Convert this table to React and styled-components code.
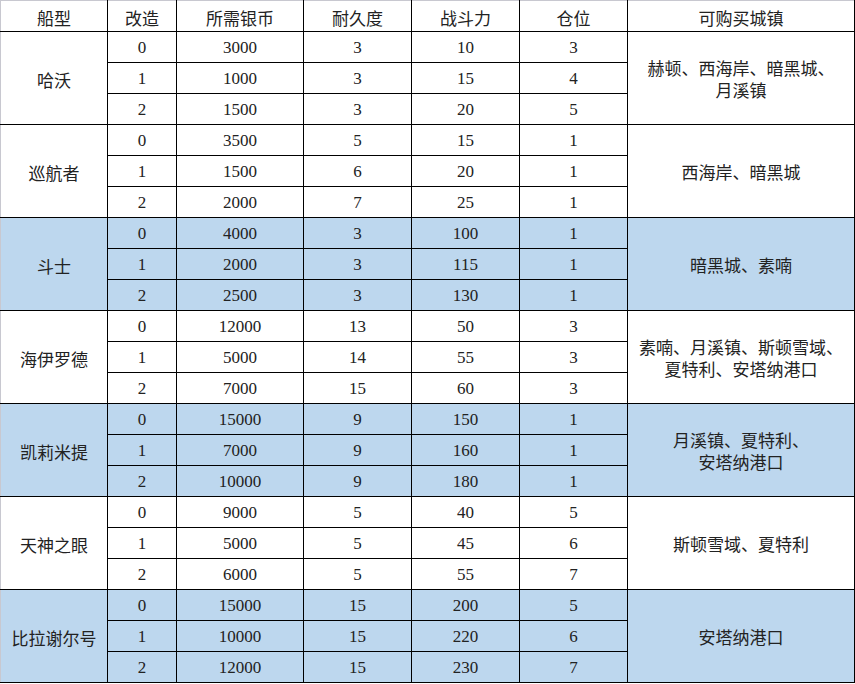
import React from "react"
import styled, { createGlobalStyle } from "styled-components"

const GlobalStyle = createGlobalStyle`
  html, body {
    margin: 0;
    padding: 0;
    background: #fff;
  }
`

const Table = styled.table`
  width: 854px;
  border-collapse: collapse;
  table-layout: fixed;
  font-family: "Liberation Serif", "Noto Sans CJK SC", serif;
  font-size: 17px;
  color: #222;
  border-top: 1px solid #c8c8d0;
  border-left: 1px solid #c8c8d0;
`

const Row = styled.tr`
  height: 31px;
  background: ${props => (props.$blue ? "#bdd7ee" : "#fff")};
`

const Head = styled.th`
  font-weight: normal;
  padding: 2px 0 0;
  text-align: center;
  vertical-align: middle;
  border-bottom: 1px solid #000;
  border-right: 1px solid #000;
  border-top: 1px solid #c8c8d0;
  &:first-child {
    border-left: 1px solid #c8c8d0;
  }
`

const Cell = styled.td`
  padding: ${props => (props.$wrap ? "5px 0 0" : "2px 0 0")};
  text-align: center;
  vertical-align: middle;
  border: 1px solid #000;
  line-height: ${props => (props.$wrap ? "22px" : "normal")};
  &:first-child {
    border-left: ${props => (props.$first ? "1px solid #c8c8d0" : "1px solid #000")};
  }
`

const columns = [
  { title: "船型", width: 107 },
  { title: "改造", width: 69 },
  { title: "所需银币", width: 127 },
  { title: "耐久度", width: 108 },
  { title: "战斗力", width: 108 },
  { title: "仓位", width: 108 },
  { title: "可购买城镇", width: 227 },
]

const ships = [
  {
    name: "哈沃",
    towns: ["赫顿、西海岸、暗黑城、", "月溪镇"],
    rows: [[3000, 3, 10, 3], [1000, 3, 15, 4], [1500, 3, 20, 5]],
  },
  {
    name: "巡航者",
    towns: ["西海岸、暗黑城"],
    rows: [[3500, 5, 15, 1], [1500, 6, 20, 1], [2000, 7, 25, 1]],
  },
  {
    name: "斗士",
    blue: true,
    towns: ["暗黑城、素喃"],
    rows: [[4000, 3, 100, 1], [2000, 3, 115, 1], [2500, 3, 130, 1]],
  },
  {
    name: "海伊罗德",
    towns: ["素喃、月溪镇、斯顿雪域、", "夏特利、安塔纳港口"],
    rows: [[12000, 13, 50, 3], [5000, 14, 55, 3], [7000, 15, 60, 3]],
  },
  {
    name: "凯莉米提",
    blue: true,
    towns: ["月溪镇、夏特利、", "安塔纳港口"],
    rows: [[15000, 9, 150, 1], [7000, 9, 160, 1], [10000, 9, 180, 1]],
  },
  {
    name: "天神之眼",
    towns: ["斯顿雪域、夏特利"],
    rows: [[9000, 5, 40, 5], [5000, 5, 45, 6], [6000, 5, 55, 7]],
  },
  {
    name: "比拉谢尔号",
    blue: true,
    towns: ["安塔纳港口"],
    rows: [[15000, 15, 200, 5], [10000, 15, 220, 6], [12000, 15, 230, 7]],
  },
]

export default function App() {
  return (
    <>
      <GlobalStyle />
      <Table>
        <colgroup>
          {columns.map(c => (
            <col key={c.title} style={{ width: c.width }} />
          ))}
        </colgroup>
        <thead>
          <Row>
            {columns.map(c => (
              <Head key={c.title}>{c.title}</Head>
            ))}
          </Row>
        </thead>
        <tbody>
          {ships.map(ship =>
            ship.rows.map((r, i) => (
              <Row key={ship.name + i} $blue={ship.blue}>
                {i === 0 && (
                  <Cell rowSpan={3} $first>
                    {ship.name}
                  </Cell>
                )}
                <Cell>{i}</Cell>
                {r.map((v, j) => (
                  <Cell key={j}>{v}</Cell>
                ))}
                {i === 0 && (
                  <Cell rowSpan={3} $wrap>
                    {ship.towns.map((t, k) => (
                      <div key={k}>{t}</div>
                    ))}
                  </Cell>
                )}
              </Row>
            ))
          )}
        </tbody>
      </Table>
    </>
  )
}
